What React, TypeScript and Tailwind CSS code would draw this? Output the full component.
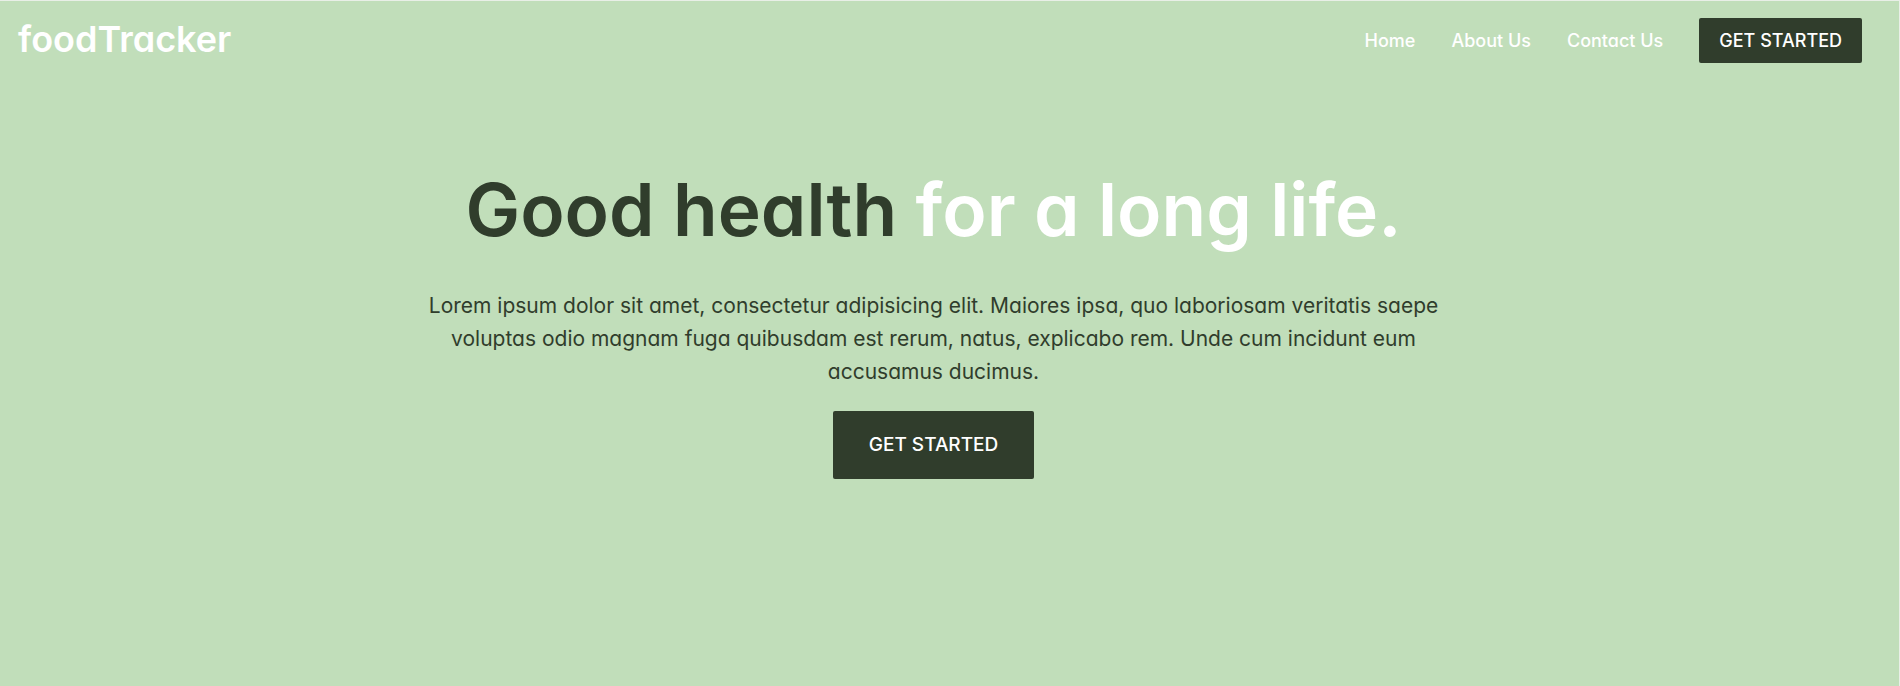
const links = [
  { label: "Home", href: "#home" },
  { label: "About Us", href: "#about" },
  { label: "Contact Us", href: "#contact" },
];

function Header() {
  return (
    <header className="flex items-center justify-between pt-[17px] pr-[37px] pl-[18px]">
      <a href="#home" className="pb-1 text-[36px] leading-10 font-semibold text-white">
        foodTracker
      </a>
      <nav aria-label="Main" className="flex items-center gap-9">
        {links.map((link) => (
          <a key={link.label} href={link.href} className="text-lg font-medium text-white">
            {link.label}
          </a>
        ))}
        <button type="button" className="h-[45px] rounded-xs bg-[#303d2c] px-5 text-lg font-medium text-white">
          GET STARTED
        </button>
      </nav>
    </header>
  );
}

function Hero() {
  return (
    <main className="flex flex-col items-center pt-[99px] pr-8 text-center">
      <h1 className="text-[73px] leading-24 font-semibold text-[#303d2c]">
        Good health <span className="text-white">for a long life.</span>
      </h1>
      <p className="mt-[31px] max-w-[1060px] text-[21px] leading-[33px] text-[#303d2c]">
        Lorem ipsum dolor sit amet, consectetur adipisicing elit. Maiores ipsa, quo laboriosam veritatis saepe
        voluptas odio magnam fuga quibusdam est rerum, natus, explicabo rem. Unde cum incidunt eum accusamus
        ducimus.
      </p>
      <button type="button" className="mt-[23px] h-[68px] rounded-xs bg-[#303d2c] px-9 text-[19px] font-medium text-white">
        GET STARTED
      </button>
    </main>
  );
}

export default function App() {
  return (
    <div className="min-h-screen border-t border-r border-[#e9efe7] bg-[#c1deba] font-['Inter',sans-serif] [font-feature-settings:'cv11']">
      <Header />
      <Hero />
    </div>
  );
}
